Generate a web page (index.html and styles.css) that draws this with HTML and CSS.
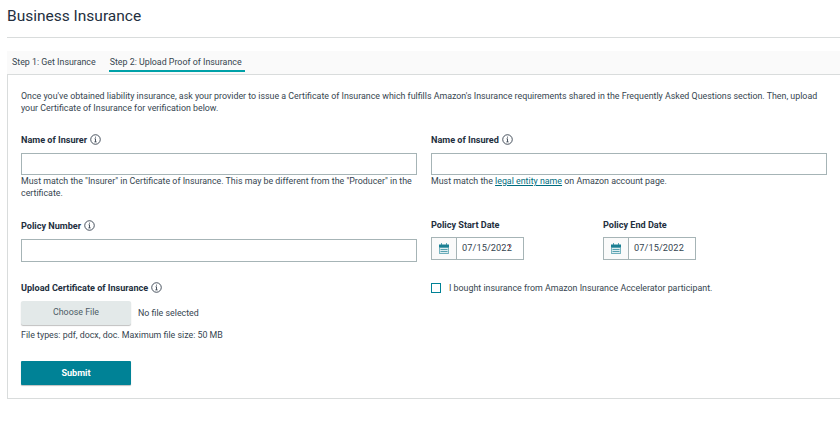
FILE: index.html
```html
<!DOCTYPE html>
<html lang="en">
<head>
<meta charset="utf-8">
<title>Business Insurance</title>
<link rel="stylesheet" href="styles.css">
</head>
<body>
<div class="page">
  <h1 class="title">Business Insurance</h1>
  <nav class="tabs">
    <a class="tab">Step 1: Get Insurance</a>
    <a class="tab active">Step 2: Upload Proof of Insurance</a>
  </nav>
  <section class="panel">
    <p class="intro">Once you've obtained liability insurance, ask your provider to issue a Certificate of Insurance which fulfills Amazon's Insurance requirements shared in the Frequently Asked Questions section. Then, upload your Certificate of Insurance for verification below.</p>
    <div class="grid">
      <div class="field row-one">
        <div class="label">Name of Insurer <svg class="info" viewBox="0 0 12 12"><circle cx="6" cy="6" r="5.200"/><path d="M5 5.200h1v3.300M4.800 8.600h2.400M6 2.900v1.100"/></svg></div>
        <div class="input"></div>
        <div class="help">Must match the "Insurer" in Certificate of Insurance. This may be different from the "Producer" in the certificate.</div>
      </div>
      <div class="field row-one">
        <div class="label">Name of Insured <svg class="info" viewBox="0 0 12 12"><circle cx="6" cy="6" r="5.200"/><path d="M5 5.200h1v3.300M4.800 8.600h2.400M6 2.900v1.100"/></svg></div>
        <div class="input"></div>
        <div class="help">Must match the <a class="link">legal entity name</a> on Amazon account page.</div>
      </div>
      <div class="field row-two">
        <div class="label">Policy Number <svg class="info" viewBox="0 0 12 12"><circle cx="6" cy="6" r="5.200"/><path d="M5 5.200h1v3.300M4.800 8.600h2.400M6 2.900v1.100"/></svg></div>
        <div class="input input-tall"></div>
      </div>
      <div class="dates row-two">
        <div class="field">
          <div class="label">Policy Start Date</div>
          <div class="date">
            <span class="date-icon"><svg class="cal" viewBox="0 0 10 11"><path class="cal-top" d="M0 1.500h10V4.500H0z"/><path class="cal-body" d="M.4 4.500h9.200v6H.4z"/><path class="cal-pins" d="M2.500 0v2M7.500 0v2M1.500 6.500h7M1.500 8.500h7"/></svg></span>
            <span class="date-value">07/15/2022<i class="caret-dot"></i></span>
          </div>
        </div>
        <div class="field">
          <div class="label">Policy End Date</div>
          <div class="date">
            <span class="date-icon"><svg class="cal" viewBox="0 0 10 11"><path class="cal-top" d="M0 1.500h10V4.500H0z"/><path class="cal-body" d="M.4 4.500h9.200v6H.4z"/><path class="cal-pins" d="M2.500 0v2M7.500 0v2M1.500 6.500h7M1.500 8.500h7"/></svg></span>
            <span class="date-value">07/15/2022</span>
          </div>
        </div>
      </div>
      <div class="field">
        <div class="label">Upload Certificate of Insurance <svg class="info" viewBox="0 0 12 12"><circle cx="6" cy="6" r="5.200"/><path d="M5 5.200h1v3.300M4.800 8.600h2.400M6 2.900v1.100"/></svg></div>
        <div class="file">
          <span class="choose">Choose File</span>
          <span class="no-file">No file selected</span>
        </div>
        <div class="help types">File types: pdf, docx, doc. Maximum file size: 50 MB</div>
        <button class="submit" type="button">Submit</button>
      </div>
      <label class="check">
        <span class="box"></span>
        <span>I bought insurance from Amazon Insurance Accelerator participant.</span>
      </label>
    </div>
  </section>
</div>
</body>
</html>
```
FILE: styles.css
```css
* { box-sizing: border-box; }
html, body { margin: 0; padding: 0; background: #fff; }
body {
  width: 840px;
  height: 429px;
  overflow: hidden;
  font-family: Roboto, "Noto Sans", sans-serif;
  color: #36454f;
}
.page { padding-left: 7px; }
.title {
  margin: 0;
  height: 38px;
  padding-top: 6px;
  border-bottom: 1px solid #d9dcdc;
  font-size: 15.5px;
  line-height: 20px;
  font-weight: 400;
  color: #232f3e;
}
.tabs {
  display: flex;
  gap: 13px;
  margin-top: 13px;
  height: 24px;
  padding-left: 5px;
  background: #fafafa;
  border-bottom: 1px solid #d9dcdc;
}
.tab {
  height: 20px;
  padding: 3px 0 0;
  font-size: 8.85px;
  line-height: 16px;
}
.tab.active {
  height: 21px;
  border-bottom: 2px solid #00a1a8;
  padding: 3px 3px 0 1px;
}
.panel {
  height: 324px;
  padding: 15px 13px 0 13px;
  border-left: 1px solid #d9dcdc;
  border-bottom: 1px solid #d9dcdc;
}
.intro {
  margin: 0;
  font-size: 8.85px;
  line-height: 12px;
}
.grid {
  display: grid;
  grid-template-columns: 396px 396px;
  column-gap: 14px;
  margin-top: 19px;
}
.row-one { height: 86px; }
.row-two { height: 62px; }
.label {
  display: flex;
  align-items: center;
  gap: 3px;
  height: 14px;
  font-size: 9.1px;
  font-weight: 700;
  color: #232f3e;
}
.info { width: 11px; height: 11px; margin-top: -1px; fill: none; stroke: #232f3e; stroke-width: .9; }
.input {
  height: 22px;
  margin-top: 6px;
  border: 1px solid #a6b4b6;
  background: #fff;
}
.input-tall { height: 23px; }
.help {
  font-size: 8.85px;
  line-height: 12px;
}
.link { color: #006d80; text-decoration: underline; }
.dates { display: flex; gap: 79px; margin-top: -1px; }
.date {
  display: flex;
  width: 93px;
  height: 23px;
  margin-top: 5px;
  border: 1px solid #a6b4b6;
}
.date-icon {
  display: flex;
  align-items: center;
  justify-content: center;
  width: 25px;
  border-right: 1px solid #a6b4b6;
  background: #fafafa;
}
.cal { width: 10px; height: 11px; }
.cal-top { fill: #1a7f93; }
.cal-body { fill: #dcecef; stroke: #1a7f93; stroke-width: .6; }
.cal-pins { fill: none; stroke: #1a7f93; stroke-width: .7; }
.date-value {
  position: relative;
  padding-left: 5px;
  font-size: 9.2px;
  line-height: 20px;
  letter-spacing: .1px;
}
.caret-dot {
  position: absolute;
  top: 7px;
  right: 2px;
  width: 1px;
  height: 2px;
  background: #d33;
}
.file { display: flex; align-items: center; gap: 7px; margin-top: 6px; }
.choose {
  display: block;
  width: 110px;
  height: 24px;
  border-radius: 2px;
  background: #e3e9e9;
  box-shadow: 0 1px 1px rgba(0,0,0,.25);
  text-align: center;
  font-size: 8.85px;
  line-height: 23px;
  color: #4d5c66;
}
.no-file { font-size: 8.85px; }
.types { margin-top: 4px; }
.submit {
  display: block;
  width: 110px;
  height: 24px;
  margin-top: 20px;
  padding: 0;
  border: 0;
  border-radius: 1px;
  background: #008296;
  box-shadow: 0 1px 1px rgba(0,0,0,.25);
  font-family: inherit;
  font-size: 9.1px;
  font-weight: 700;
  color: #fff;
}
.check {
  display: flex;
  align-items: flex-start;
  gap: 8px;
  font-size: 8.85px;
  line-height: 11px;
  padding-top: 2px;
}
.box {
  width: 10px;
  height: 10px;
  border: 1px solid #008296;
}
```
